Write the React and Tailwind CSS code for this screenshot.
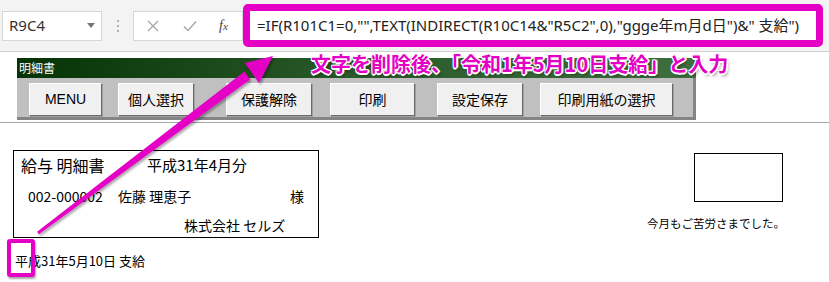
import React from "react";

const jp = "font-['Noto_Sans_CJK_JP',sans-serif]";

function SheetButton({ label, className }) {
  return (
    <div
      className={`h-[33px] flex items-center justify-center bg-[#f0f0f0] border border-t-white border-l-white border-r-[#6a6a6a] border-b-[#6a6a6a] shadow-[1px_1px_0_#a0a0a0] text-[14px] text-black ${className}`}
    >
      {label}
    </div>
  );
}

export default function App() {
  const formula = '=IF(R101C1=0,"",TEXT(INDIRECT(R10C14&"R5C2",0),"ggge年m月d日")&" 支給")';

  return (
    <div className={`relative w-[829px] h-[282px] overflow-hidden bg-white ${jp}`}>
      {/* formula bar */}
      <div className="h-[52px] flex items-center bg-[#f3f3f3] border-b border-[#d0d0d0]">
        <div className="ml-[2px] w-[100px] h-[30px] bg-white border border-[#d6d6d6] flex items-center justify-between pl-[6px] pr-[6px]">
          <span className="font-['Noto_Sans',sans-serif] text-[15px] text-[#333]">R9C4</span>
          <span className="w-0 h-0 border-l-[4px] border-r-[4px] border-t-[5px] border-l-transparent border-r-transparent border-t-[#777]" />
        </div>
        <div className="w-[31px] flex flex-col items-center gap-[3px]">
          <span className="w-[2px] h-[2px] bg-[#b0b0b0]" />
          <span className="w-[2px] h-[2px] bg-[#b0b0b0]" />
          <span className="w-[2px] h-[2px] bg-[#b0b0b0]" />
        </div>
        <div className="w-[110px] h-[30px] bg-white border border-[#d6d6d6] flex items-center">
          <svg className="ml-[13px]" width="12" height="12" viewBox="0 0 12 12">
            <path d="M1 1L11 11M11 1L1 11" stroke="#a8a8a8" strokeWidth="1.4" />
          </svg>
          <svg className="ml-[24px]" width="14" height="12" viewBox="0 0 14 12">
            <path d="M1 6.5L5 10.5L13 1.5" stroke="#a8a8a8" strokeWidth="1.5" fill="none" />
          </svg>
          <span className="ml-[22px] font-['Liberation_Serif',serif] italic text-[14px] text-[#444]">
            f<span className="text-[11px]">x</span>
          </span>
        </div>
        <div className="w-[580px] h-[43px] border-[7px] border-[#e400c4] rounded-[5px] bg-white flex items-center pl-[7px]">
          <span className="font-['Noto_Sans','Noto_Sans_CJK_JP',sans-serif] text-[15px] text-[#222] whitespace-nowrap">
            {formula}
          </span>
        </div>
      </div>

      {/* userform panel */}
      <div className="mt-[6px] ml-[17px] w-[679px]">
        <div className="h-[20px] bg-gradient-to-r from-[#063306] via-[#2a5a2a] to-[#3f6e3f] text-white text-[12px] leading-[20px] pl-[2px]">
          明細書
        </div>
        <div className="h-[42px] bg-[#c0c0c0] border-r-[3px] border-b-[3px] border-[#848484] flex items-start pt-[5px]">
          <SheetButton label="MENU" className="ml-[12px] w-[73px] font-['Liberation_Sans',sans-serif] text-[13px]" />
          <SheetButton label="個人選択" className="ml-[16px] w-[76px]" />
          <SheetButton label="保護解除" className="ml-[32px] w-[86px]" />
          <SheetButton label="印刷" className="ml-[18px] w-[85px]" />
          <SheetButton label="設定保存" className="ml-[22px] w-[86px]" />
          <SheetButton label="印刷用紙の選択" className="ml-[17px] w-[133px]" />
        </div>
      </div>
      <div className="mt-[2px] h-px bg-[#a8a8a8]" />

      {/* sheet content */}
      <div className="flex">
        <div className="ml-[13px] mt-[27px] flex flex-col">
          <div className="w-[306px] h-[88px] border border-black flex flex-col text-black">
            <div className="h-[28px] flex items-center pl-[7px]">
              <span className="w-[126px] text-[16px]">給与 明細書</span>
              <span className="text-[15px]">平成31年4月分</span>
            </div>
            <div className="h-[34px] flex items-center pl-[14px] text-[14px]">
              <span className="w-[90px]">002-000002</span>
              <span className="w-[172px]">佐藤 理恵子</span>
              <span>様</span>
            </div>
            <div className="h-[24px] flex items-center pl-[170px] text-[14px]">株式会社 セルズ</div>
          </div>
          <div className="mt-[15px] pl-[2px] text-[13px] leading-[16px] text-black">平成31年5月10日 支給</div>
        </div>
        <div className="ml-auto mr-[44px] mt-[30px] flex flex-col items-end">
          <div className="mr-[2px] w-[89px] h-[49px] border border-black" />
          <div className="mt-[14px] text-[11.5px] leading-[14px] text-black">今月もご苦労さまでした。</div>
        </div>
      </div>

      {/* annotations */}
      <div className="absolute left-[311px] top-[51px] leading-[26px] text-[20px] font-bold text-[#e400c4] whitespace-nowrap [text-shadow:1px_1px_0_#fff,-1px_-1px_0_#fff,1px_-1px_0_#fff,-1px_1px_0_#fff,0_2px_0_#fff,2px_0_0_#fff,2px_3px_3px_rgba(0,0,0,0.35)]">
        文字を削除後、「令和1年5月10日支給」と入力
      </div>

      <svg className="absolute inset-0 pointer-events-none" width="829" height="282" viewBox="0 0 829 282">
        <defs>
          <filter id="sh" x="-10%" y="-10%" width="130%" height="130%">
            <feDropShadow dx="1.5" dy="2" stdDeviation="1.2" floodColor="#000" floodOpacity="0.35" />
          </filter>
        </defs>
        <g filter="url(#sh)" fill="#e400c4">
          <polygon points="37.1,231.8 38.9,234.2 250.2,79.4 244.4,71.6" />
          <polygon points="273,56 245,63 259,83" />
        </g>
      </svg>

      <div className="absolute left-[7px] top-[239px] w-[28px] h-[38px] border-[4px] border-[#e400c4] rounded-[3px] shadow-[1px_2px_2px_rgba(0,0,0,0.35)]" />
    </div>
  );
}
